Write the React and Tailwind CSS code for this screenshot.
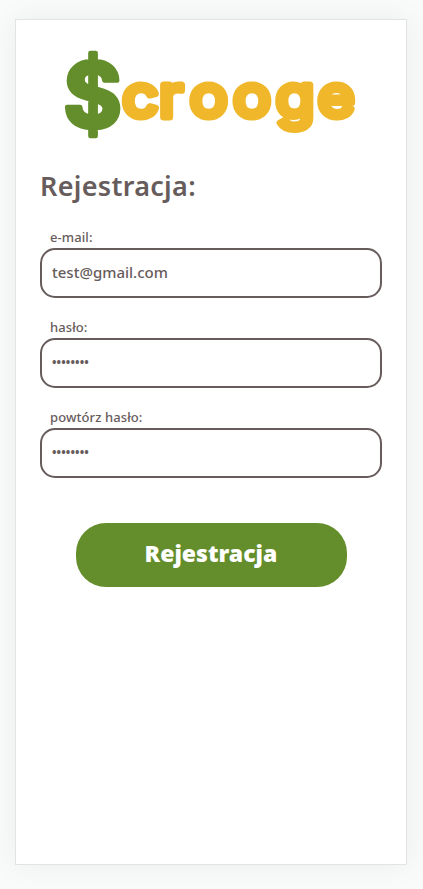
const fields = [
  { id: 'email', label: 'e-mail:', type: 'text', value: 'test@gmail.com' },
  { id: 'password', label: 'hasło:', type: 'dots', value: '••••••••' },
  { id: 'repeat', label: 'powtórz hasło:', type: 'dots', value: '••••••••' },
];

function Logo() {
  return (
    <svg
      className="block h-[100px] w-[300px] self-center overflow-visible font-['Inter',sans-serif]"
      viewBox="0 0 300 100"
      role="img"
      aria-label="$crooge"
      strokeLinejoin="round"
      strokeLinecap="round"
    >
      <text x="2.5" y="82" fontSize="89" fontWeight="700" fill="#648e2b" stroke="#648e2b" strokeWidth="4.5">
        $
      </text>
      <text
        transform="scale(1.07 1)"
        x="57.3 91.5 120.3 160.7 200.8 240"
        y="72.5"
        fontSize="59"
        fontWeight="400"
        fill="#f0b72b"
        stroke="#f0b72b"
        strokeWidth="7"
      >
        crooge
      </text>
    </svg>
  );
}

function Field({ field }) {
  return (
    <div className="flex h-[90px] flex-col">
      <label htmlFor={field.id} className="h-[22px] pl-2.5 pt-0.5 text-[13px] font-medium leading-[18px] tracking-[0.09px]">
        {field.label}
      </label>
      <div
        id={field.id}
        className={`flex h-[50px] items-center rounded-[15px] border-2 border-[#675c5c] pl-2.5 ${
          field.type === 'dots' ? 'text-[12px] font-bold tracking-[0.1px]' : 'pb-0.5 text-[15px] font-medium'
        }`}
      >
        {field.value}
      </div>
    </div>
  );
}

export default function App() {
  return (
    <main className="h-[889px] w-[423px] overflow-hidden bg-[#f9fbfa] px-[15px] pt-[19px] font-['Noto_Sans',sans-serif] text-[#675c5c]">
      <section className="flex h-[846px] w-[392px] flex-col border border-[#e1e4e3] bg-white px-6 pt-[25px] shadow-[0_0_30px_rgba(0,0,0,0.06)]">
        <Logo />
        <h1 className="mt-[19px] h-[44px] text-[27px] font-semibold leading-[44px] tracking-[0.3px]">Rejestracja:</h1>
        <div className="mt-[18px] flex flex-col">
          {fields.map((field) => (
            <Field key={field.id} field={field} />
          ))}
        </div>
        <button className="mt-[27px] h-16 w-[271px] self-center rounded-[30px] bg-[#648e2b] pb-1 text-[23px] font-black text-white">
          Rejestracja
        </button>
      </section>
    </main>
  );
}
